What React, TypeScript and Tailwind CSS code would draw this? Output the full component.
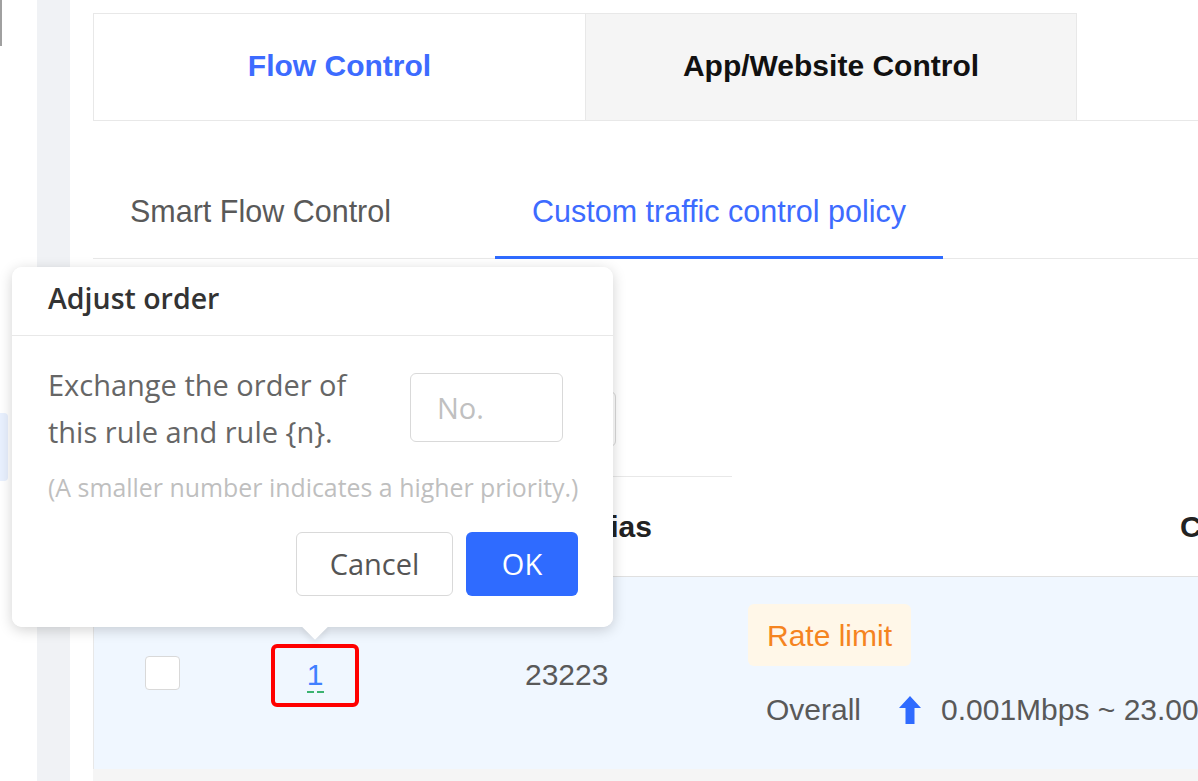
import React from 'react';

const pageFont = "font-['Liberation_Sans','Arial',sans-serif]";
const popFont = "font-['Open_Sans','Noto_Sans',sans-serif]";

function UpArrow() {
  return (
    <svg width="22" height="28" viewBox="0 0 22 28" className="shrink-0">
      <path d="M11 0 L22 12 H15.5 V28 H6.5 V12 H0 Z" fill="#2f6bff" />
    </svg>
  );
}

function AdjustOrderPopover() {
  return (
    <div className={`absolute left-[12px] top-[267px] w-[601px] h-[360px] bg-white rounded-[10px] shadow-[0_3px_14px_rgba(0,0,0,0.18)] ${popFont}`}>
      <div className="absolute left-[294px] top-[351px] w-[18px] h-[18px] rotate-45 bg-white shadow-[3px_3px_6px_rgba(0,0,0,0.08)]" />
      <div className="relative bg-white rounded-[10px] h-full">
        <div className="h-[69px] px-[36px] pb-[6px] flex items-center border-b border-[#e8e8e8] text-[28.5px] font-semibold text-[#333]">
          Adjust order
        </div>
        <div className="pl-[36px] pr-[35px] pt-[25px]">
          <div className="flex items-start">
            <p className="w-[336px] text-[29px] leading-[47px] text-[#666]">
              Exchange the order of this rule and rule {'{n}'}.
            </p>
            <input
              placeholder="No."
              className="ml-[26px] mt-[12px] w-[153px] h-[69px] border border-[#d9d9d9] rounded-[6px] px-[26px] text-[29px] text-[#333] placeholder:text-[#c0c0c0] outline-none"
            />
          </div>
          <p className="mt-[18px] text-[24.9px] leading-[28px] text-[#bfbfbf] whitespace-nowrap">
            (A smaller number indicates a higher priority.)
          </p>
          <div className="mt-[31px] flex justify-end gap-[13px]">
            <button className="w-[157px] h-[64px] border border-[#d9d9d9] rounded-[6px] bg-white text-[29px] text-[#555]">
              Cancel
            </button>
            <button className="w-[112px] h-[64px] rounded-[6px] bg-[#2f6bff] text-[29px] text-white">
              OK
            </button>
          </div>
        </div>
      </div>
    </div>
  );
}

export default function App() {
  return (
    <div className={`relative w-[1198px] h-[781px] overflow-hidden bg-white flex ${pageFont}`}>
      {/* side menu edge */}
      <div className="w-[37px] shrink-0 flex flex-col">
        <div className="w-[2px] h-[46px] bg-[#a0a0a0]" />
        <div className="mt-[367px] w-[8px] h-[68px] bg-[#e8f0fe] rounded-r-[4px]" />
      </div>
      <div className="w-[33px] shrink-0 bg-[#f0f2f5]" />

      <div className="flex-1 min-w-0 pl-[23px] pt-[13px] flex flex-col">
        {/* top tabs */}
        <div className="flex border-b border-[#e8e8e8]">
          <div className="w-[492px] h-[107px] pb-[4px] border-t border-l border-[#e8e8e8] flex items-center justify-center text-[30px] font-bold text-[#3d6bff]">
            Flow Control
          </div>
          <div className="w-[492px] h-[107px] pb-[4px] border-t border-l border-r border-[#e8e8e8] bg-[#f5f5f5] flex items-center justify-center text-[30px] font-bold text-[#111]">
            App/Website Control
          </div>
        </div>

        {/* sub tabs */}
        <div className="mt-[74px] flex gap-[68px] border-b border-[#e8e8e8]">
          <div className="pl-[37px] pr-[36px] pb-[29px] border-b-[3px] border-transparent -mb-px text-[30.5px] leading-[32px] text-[#595959] whitespace-nowrap">
            Smart Flow Control
          </div>
          <div className="px-[37px] pb-[29px] border-b-[3px] border-[#2f6bff] -mb-px text-[30.5px] leading-[32px] text-[#3d6bff] whitespace-nowrap">
            Custom traffic control policy
          </div>
        </div>

        {/* toolbar (mostly hidden) */}
        <div className="h-[217px]">
          <div className="ml-[307px] mt-[132px] w-[216px] h-[56px] border border-[#d9d9d9] rounded-[6px]" />
        </div>

        {/* table */}
        <div className="w-[639px] h-px bg-[#e8e8e8]" />
        <div className="h-[100px] flex items-center border-b border-[#e0e0e0] text-[30px] font-bold text-[#222]">
          <div className="w-[139px] shrink-0" />
          <div className="w-[168px] shrink-0 text-center">No.</div>
          <div className="w-[348px] shrink-0 pl-[108px] whitespace-nowrap">Rule Alias</div>
          <div className="flex-1 pl-[432px] whitespace-nowrap overflow-hidden">Control</div>
        </div>
        <div className="h-[192px] flex bg-[#f0f7ff] border-l border-[#e8e8e8] text-[30px] text-[#595959]">
          <div className="w-[136px] shrink-0 flex items-center justify-center">
            <span className="w-[35px] h-[34px] rounded-[4px] border border-[#d9d9d9] bg-white" />
          </div>
          <div className="w-[170px] shrink-0 flex items-center justify-center">
            <div className="mt-[5px] w-[88px] h-[63px] border-[4px] border-[#ff0000] rounded-[6px] flex flex-col items-center justify-center">
              <span className="text-[30px] leading-[30px] text-[#4080ff] mt-[2px]">1</span>
              <span className="flex gap-[3px] mt-[1px]">
                <span className="w-[7px] h-[2px] bg-[#3cb371]" />
                <span className="w-[7px] h-[2px] bg-[#3cb371]" />
              </span>
            </div>
          </div>
          <div className="w-[348px] shrink-0 pl-[125px] flex items-center pt-[2px]">23223</div>
          <div className="flex-1 min-w-0 pt-[27px] flex flex-col items-start">
            <span className="h-[62px] px-[19px] rounded-[6px] bg-[#fff7e8] text-[#f5841f] flex items-center">
              Rate limit
            </span>
            <div className="mt-[27px] pl-[18px] h-[32px] flex items-center whitespace-nowrap">
              <span>Overall</span>
              <span className="ml-[38px] mt-[2px]">
                <UpArrow />
              </span>
              <span className="ml-[20px]">0.001Mbps ~ 23.000Mbps</span>
            </div>
          </div>
        </div>
        <div className="flex-1 bg-[#f5f5f5]" />
      </div>

      <AdjustOrderPopover />
    </div>
  );
}
